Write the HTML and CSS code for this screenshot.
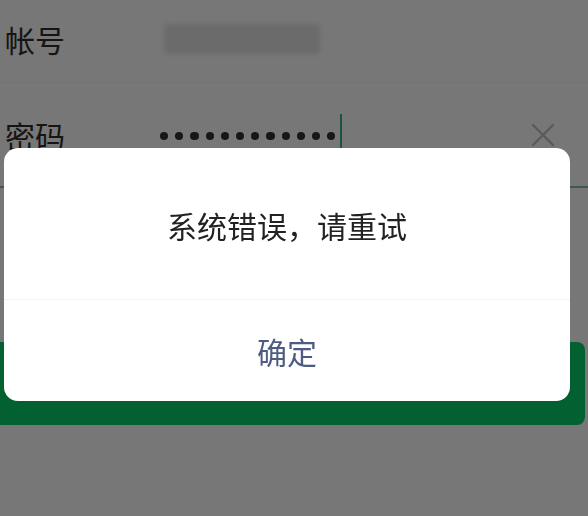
FILE: index.html
```html
<!DOCTYPE html>
<html lang="zh-CN">
<head>
<meta charset="utf-8">
<title>登录</title>
<link rel="stylesheet" href="styles.css">
</head>
<body>
<div class="page">
  <div class="form">
    <div class="row row-account">
      <span class="label">帐号</span>
      <div class="field">
        <div class="blurred"></div>
      </div>
    </div>
    <div class="sep"></div>
    <div class="row row-password">
      <span class="label">密码</span>
      <div class="field">
        <div class="dots">
          <span class="dot"></span><span class="dot"></span><span class="dot"></span><span class="dot"></span>
          <span class="dot"></span><span class="dot"></span><span class="dot"></span><span class="dot"></span>
          <span class="dot"></span><span class="dot"></span><span class="dot"></span><span class="dot"></span>
        </div>
        <span class="cursor"></span>
      </div>
      <svg class="clear" width="26" height="26" viewBox="0 0 26 26" aria-hidden="true">
        <path d="M3 3 L23 23 M23 3 L3 23" stroke="currentColor" stroke-width="2.2" fill="none" stroke-linecap="round"/>
      </svg>
    </div>
  </div>
  <button class="login" aria-label="登录"></button>
</div>
<div class="mask"></div>
<div class="dialog">
  <div class="dialog-body">系统错误，请重试</div>
  <div class="dialog-foot">
    <span class="dialog-btn">确定</span>
  </div>
</div>
</body>
</html>
```
FILE: styles.css
```css
html, body {
  margin: 0;
  padding: 0;
}
body {
  width: 588px;
  height: 516px;
  overflow: hidden;
  background: #eeeeee;
  font-family: "Noto Sans CJK SC", "Noto Sans", sans-serif;
}
.page {
  width: 588px;
  height: 516px;
}
.form {
  display: flex;
  flex-direction: column;
}
.row {
  display: flex;
  align-items: center;
  padding-left: 5px;
  box-sizing: border-box;
}
.row-account {
  height: 85px;
  padding-bottom: 8px;
}
.row-password {
  height: 102px;
  padding-right: 32px;
  padding-bottom: 2px;
  border-bottom: 2px solid #7eb498;
}
.label {
  width: 155px;
  font-size: 30px;
  line-height: 40px;
  color: #2a2a2a;
  flex: none;
}
.field {
  flex: 1;
  display: flex;
  align-items: center;
}
.blurred {
  width: 156px;
  height: 30px;
  margin-left: 4px;
  background: #d6d6d6;
  border-radius: 4px;
  filter: blur(2px);
}
.sep {
  height: 1px;
  background: #f6f6f6;
}
.dots {
  display: flex;
  gap: 7px;
  padding-top: 2px;
}
.dot {
  width: 8.2px;
  height: 8.2px;
  border-radius: 50%;
  background: #2e2e2e;
}
.cursor {
  width: 2px;
  height: 42px;
  margin-left: 5px;
  background: #36a870;
}
.clear {
  color: #b2b2b2;
  flex: none;
}
.login {
  display: block;
  margin: 154px 0 0 -10px;
  width: 595px;
  height: 83px;
  border: 0;
  border-radius: 8px;
  background: #07c160;
}
.mask {
  position: fixed;
  inset: 0;
  background: rgba(0, 0, 0, 0.5);
}
.dialog {
  position: fixed;
  left: 4px;
  top: 148px;
  width: 566px;
  height: 253px;
  background: #ffffff;
  border-radius: 14px;
  display: flex;
  flex-direction: column;
  overflow: hidden;
}
.dialog-body {
  height: 152px;
  display: flex;
  align-items: center;
  justify-content: center;
  font-size: 30px;
  color: #222222;
  padding-top: 2px;
  box-sizing: border-box;
  border-bottom: 1px solid #f3f3f3;
}
.dialog-foot {
  flex: 1;
  display: flex;
  align-items: center;
  justify-content: center;
}
.dialog-btn {
  font-size: 30px;
  color: #4e5c84;
}
```
